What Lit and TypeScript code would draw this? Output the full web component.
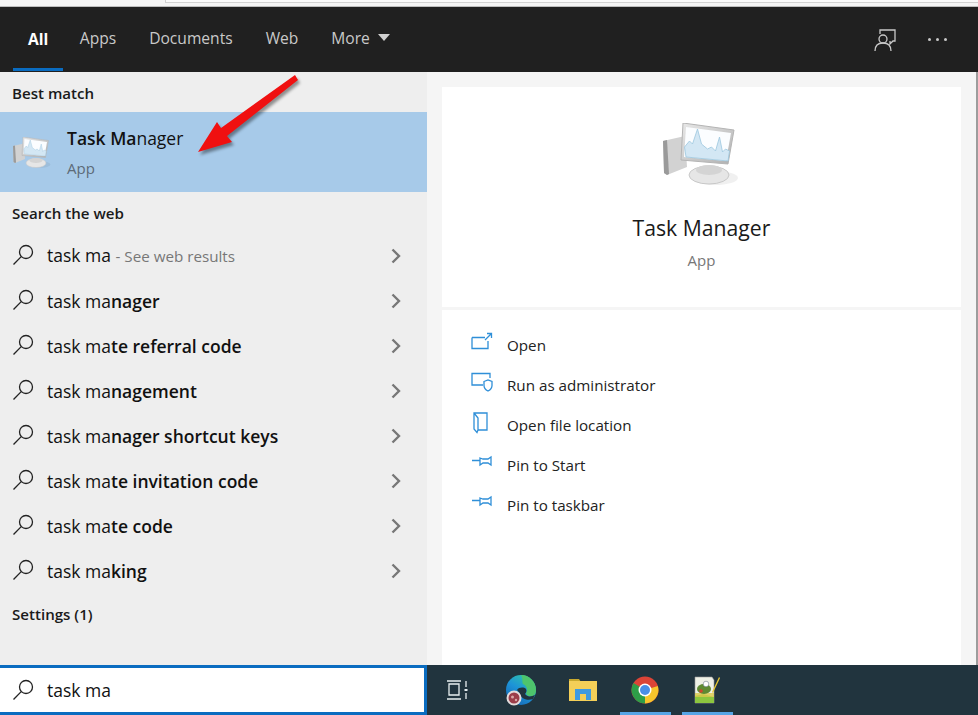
import { LitElement, html, css, svg } from "lit";
import { customElement } from "lit/decorators.js";

const monitor = (w: number, h: number) => html`<svg width=${w} height=${h} viewBox="0 0 76 64">
  <defs><linearGradient id="mg" x1="0" y1="0" x2="1" y2="1"><stop offset="0" stop-color="#e8e8e8"/><stop offset="1" stop-color="#b0b0b0"/></linearGradient></defs>
  <ellipse cx="52" cy="55" rx="23" ry="7" fill="#000" opacity=".06"/>
  <path d="M0 18l22-5 2 31-20 8-3-2z" fill="#d2d2d2"/>
  <path d="M0 18l4-1 2 34-2 1-3-2z" fill="#9a9a9a"/>
  <ellipse cx="46" cy="52" rx="20" ry="9" fill="#e6e6e6" stroke="#c8c8c8"/>
  <ellipse cx="46" cy="47" rx="13" ry="5" fill="#d4d4d4"/>
  <path d="M20 0l51 7-6 34-47-4z" fill="url(#mg)" stroke="#b4b4b4"/>
  <path d="M23 4l45 6-5 28-42-4z" fill="#fbfdff"/>
  <path d="M21.500 24l5-6 3 3 5-15 4 15 6 5 4-2 4 4 4-14 3 15 3-3 4 2-1.500 10-42-4z" fill="#d3e7f4" stroke="#9cc6de" stroke-width=".8"/>
</svg>`;

const searchIcon = html`<svg class="sicon" width="22" height="22" viewBox="0 0 22 22" fill="none" stroke="#222" stroke-width="1.3"><circle cx="14" cy="8" r="6.5"/><path d="M9.2 12.6L1.5 20.5"/></svg>`;
const chevron = html`<svg width="10" height="16" viewBox="0 0 10 16" fill="none" stroke="#777" stroke-width="2.4"><path d="M1.5 1.5L8 8l-6.5 6.5"/></svg>`;

const actionIcons = [
  svg`<path d="M1 5.500h13M1 5.500v11h16V9"/><path d="M14 8l6-6M16 1.500h4.500V6"/>`,
  svg`<path d="M12 13H1V1.500h18V6"/><path d="M13 9.500l4-1.500 4 1.500v4c0 3-2 4.500-4 5.500-2-1-4-2.500-4-5.500z"/>`,
  svg`<path d="M3 1h13v17H7l-1 2.500-3-3.500zM3 1l4 5v12"/>`,
  svg`<path d="M1 8.500h8M9 6l3 1h5l3-2v8l-3-2h-5l-3 2z"/>`,
  svg`<path d="M1 8.500h8M9 6l3 1h5l3-2v8l-3-2h-5l-3 2z"/>`,
];

const results: [string, string][] = [
  ["task ma", "nager"],
  ["task ma", "te referral code"],
  ["task ma", "nagement"],
  ["task ma", "nager shortcut keys"],
  ["task ma", "te invitation code"],
  ["task ma", "te code"],
  ["task ma", "king"],
];
const actions = ["Open", "Run as administrator", "Open file location", "Pin to Start", "Pin to taskbar"];

@customElement("app-root")
export class AppRoot extends LitElement {
  static styles = css`
    :host { display: block; width: 978px; height: 715px; position: relative; overflow: hidden; background: #fff;
      font-family: "Open Sans", "Noto Sans", "Liberation Sans", sans-serif; color: #111; }
    .strip { height: 6px; background: #f4f4f4; border-bottom: 1px solid #bdbdbd; display: flex; }
    .strip .frame { margin-left: 165px; flex: 1; height: 2px; background: #fafafa; border-left: 1px solid #cfcfcf; border-bottom: 1px solid #d2d2d2; }
    .tabs { height: 65px; background: #202020; display: flex; align-items: stretch; padding-left: 13px; color: #c9c9c9; font-size: 15.600px; }
    .tab { display: flex; align-items: center; padding: 0 16.500px 4px; white-space: nowrap; }
    .tab.active { color: #fff; font-weight: 700; padding: 0 15px 0; border-bottom: 3px solid #0a6cc0; height: 58px; margin-top: 3px; }
    .tab.more { gap: 8px; }
    .caret { width: 0; height: 0; border-left: 6.500px solid transparent; border-right: 6.500px solid transparent; border-top: 7px solid #d0d0d0; }
    .tools { margin-left: auto; display: flex; align-items: center; gap: 30px; padding: 0 31px 0 0; }
    .dots { display: flex; gap: 5px; } .dots i { width: 3px; height: 3px; border-radius: 50%; background: #c8c8c8; display: block; }
    .main { display: flex; height: 593px; }
    .left { width: 427px; background: #eeeeee; flex: none; display: flex; flex-direction: column; }
    .heading { font-size: 15.100px; font-weight: 600; color: #1a1a1a; padding: 2px 0 0 12px; box-sizing: border-box; display: flex; align-items: center; height: 40px; }
    .heading.last { padding-top: 4px; }
    .best { height: 80px; background: #a7cae9; display: flex; align-items: center; padding-left: 13px; }
    .best .mon { width: 54px; flex: none; display: flex; margin-top: 1px; }
    .best .title { font-size: 17.500px; line-height: 24px; margin-top: -1px; } .best .title b { font-weight: 600; }
    .best .sub { font-size: 15px; color: #5d6b78; line-height: 20px; margin-top: 8px; }
    .row { height: 45px; box-sizing: border-box; display: flex; align-items: center; padding: 2px 26px 0 12px; font-size: 17.500px; }
    .row .sicon { flex: none; margin: -2px 13px 0 0; }
    .row .txt { flex: 1; white-space: nowrap; } .row b { font-weight: 600; }
    .row .txt.first { margin-top: -2px; }
    .row .hint { font-size: 15.200px; color: #777; }
    .right { flex: 1; background: #f5f5f5; padding: 15px 15px 0; display: flex; flex-direction: column; gap: 3px; border-right: 2px solid #9d9d9d; box-sizing: border-box; }
    .card { background: #fff; }
    .hero { height: 220px; display: flex; flex-direction: column; align-items: center; }
    .hero .mon { margin-top: 36px; height: 66px; display: flex; margin-right: 1px; }
    .hero .name { font-size: 21.200px; margin-top: 24px; line-height: 30px; color: #1a1a1a; }
    .hero .kind { font-size: 15px; color: #777; margin-top: 7px; line-height: 20px; }
    .acts { flex: 1; padding: 15px 0 0 29px; }
    .act { height: 40px; display: flex; align-items: center; font-size: 15.200px; color: #222; }
    .act svg { margin-right: 14px; flex: none; margin-top: -5px; }
    .bottom { display: flex; height: 50px; background: #21343e; position: absolute; left: 0; right: 0; top: 665px; }
    .input { width: 427px; box-sizing: border-box; background: #fff; border: 3px solid #0a6cc0; border-left: none; display: flex; align-items: center; padding-left: 12px; font-size: 17.500px; flex: none; }
    .input svg { margin-right: 13px; }
    .tb { display: flex; align-items: center; }
    .tbi { width: 62px; height: 50px; display: flex; align-items: center; justify-content: center; box-sizing: border-box; flex: none; }
    .tbi.view { width: 60px; }
    .tbi.edge { margin-left: 2px; width: 63px; }
    .tbi.run { border-bottom: 3px solid #56a5e6; padding-top: 3px; margin: 0 5.500px; width: 51px; }
    .arrow { position: absolute; left: 190px; top: 70px; pointer-events: none; filter: drop-shadow(2px 3px 1.500px rgba(0,0,0,.4)); }
  `;
  render() {
    return html`
      <div class="strip"><div class="frame"></div></div>
      <div class="tabs">
        <div class="tab active">All</div><div class="tab">Apps</div><div class="tab">Documents</div><div class="tab">Web</div>
        <div class="tab more">More <span class="caret"></span></div>
        <div class="tools">
          <svg width="24" height="24" viewBox="0 0 24 24" fill="none" stroke="#c8c8c8" stroke-width="1.300"><path d="M6 6V2h15v11h-2l-3 3v-3"/><circle cx="9" cy="11" r="4"/><path d="M1 23c0-5 3-8 8-8s8 3 8 8"/></svg>
          <div class="dots"><i></i><i></i><i></i></div>
        </div>
      </div>
      <div class="main">
        <div class="left">
          <div class="heading">Best match</div>
          <div class="best"><div class="mon">${monitor(38, 32)}</div>
            <div><div class="title"><b>Task Ma</b>nager</div><div class="sub">App</div></div></div>
          <div class="heading">Search the web</div>
          <div class="row">${searchIcon}<span class="txt first">task ma <span class="hint">- See web results</span></span>${chevron}</div>
          ${results.map(([a, b]) => html`<div class="row">${searchIcon}<span class="txt">${a}<b>${b}</b></span>${chevron}</div>`)}
          <div class="heading last">Settings (1)</div>
        </div>
        <div class="right">
          <div class="card hero"><div class="mon">${monitor(76, 64)}</div><div class="name">Task Manager</div><div class="kind">App</div></div>
          <div class="card acts">
            ${actions.map((a, i) => html`<div class="act"><svg width="22" height="22" viewBox="0 0 22 22" fill="none" stroke="#2f8fd8" stroke-width="1.300">${actionIcons[i]}</svg>${a}</div>`)}
          </div>
        </div>
      </div>
      <div class="bottom">
        <div class="input">${searchIcon}task ma</div>
        <div class="tb">
          <div class="tbi view"><svg width="22" height="20" viewBox="0 0 22 20" fill="none" stroke="#e8eef0" stroke-width="1.300"><path d="M1 1h14M1 19h14M3 4h10v11H3zM20 1v6M20 13v6"/><path d="M20 9v2" stroke-width="3"/></svg></div>
          <div class="tbi edge"><svg width="32" height="32" viewBox="0 0 32 32">
            <defs><linearGradient id="eg" x1="0.700" y1="0" x2="0.100" y2="1"><stop offset="0" stop-color="#2fc2a8"/><stop offset=".45" stop-color="#1d94d8"/><stop offset="1" stop-color="#1560b0"/></linearGradient></defs>
            <circle cx="16" cy="16" r="15" fill="url(#eg)"/>
            <path d="M16 1a15 15 0 0 1 15 15c0 3-1 5-3 6-3 1-7 0-7-3 2-3 1-7-3-9-1-1 0-7-2-9z" fill="#4ec46c"/>
            <path d="M12 16c2-3 7-3 9-1 1 2 0 4-1 5 2 3 6 3 10 1l-2 4c-5 2-11 0-13-4-1-3-2-4-3-5z" fill="#21343e"/>
            <circle cx="9" cy="24" r="7.500" fill="#e4dcdc"/><circle cx="9" cy="24" r="5.500" fill="#9b3d4a"/><circle cx="7.500" cy="23" r="1.500" fill="#d9a7a7"/><circle cx="11" cy="26" r="1.200" fill="#d9a7a7"/></svg></div>
          <div class="tbi"><svg width="28" height="24" viewBox="0 0 28 24"><path d="M0 1h10l2 3h-12z" fill="#c9a92e"/><rect y="3" width="28" height="20" fill="#f4cf58"/><path d="M6 22V11h16v11h-5v-6h-6v6z" fill="#3f9ae0"/></svg></div>
          <div class="tbi run"><svg width="28" height="28" viewBox="0 0 28 28"><circle cx="14" cy="14" r="13.500" fill="#dc4437"/><path d="M14 14L2.500 7A13.500 13.500 0 0 0 14 27.500z" fill="#2e9e48"/><path d="M14 14l12.800-4A13.500 13.500 0 0 1 14 27.500z" fill="#f7c52c"/><circle cx="14" cy="14" r="6.500" fill="#fff"/><circle cx="14" cy="14" r="5" fill="#4a8ee8"/></svg></div>
          <div class="tbi run"><svg width="30" height="28" viewBox="0 0 30 28"><path d="M3 1h17l2 3v23H3z" fill="#eef0e6" stroke="#999" stroke-width=".6"/><path d="M3 20l8-2 11 3v6H3z" fill="#8cc63f"/><path d="M3 17h19v4H3z" fill="#d9c84a" opacity=".8"/><ellipse cx="12" cy="13" rx="7" ry="5" fill="#5e8a32"/><circle cx="14" cy="8" r="2.800" fill="#fff" stroke="#567" stroke-width=".5"/><circle cx="9" cy="15" r="1.800" fill="#d0442e"/><path d="M20 16L27 1l1 1-7 15z" fill="#e6c631"/></svg></div>
        </div>
      </div>
      <svg class="arrow" width="120" height="100" viewBox="190 70 120 100" aria-hidden="true">
        <path d="M295 75L298 80 227 136 232 142 198 152 217 122 221 128z" fill="#f01010"/>
      </svg>
    `;
  }
}
